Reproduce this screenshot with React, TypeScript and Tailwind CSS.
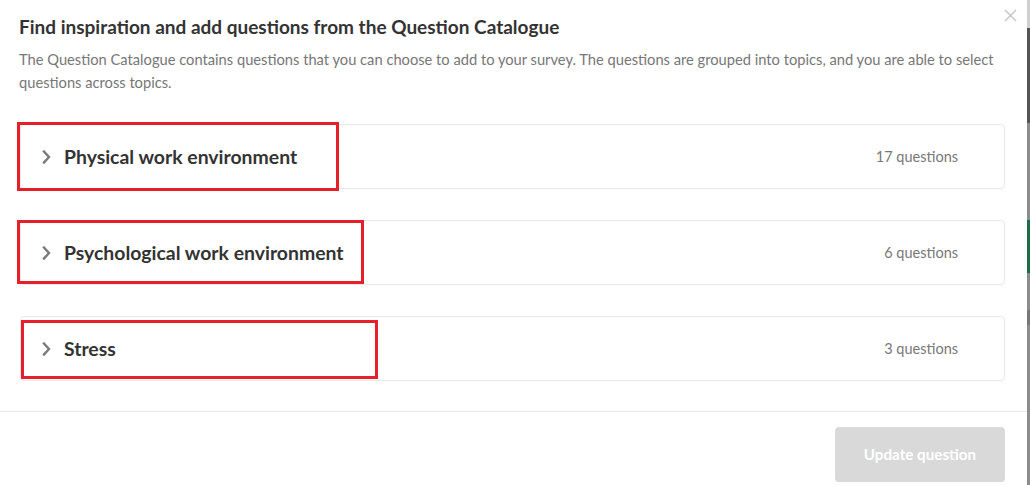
const topics = [
  { name: "Physical work environment", count: 17, mark: "left-[-3px] top-[-2px] h-[69px] w-[322px]" },
  { name: "Psychological work environment", count: 6, mark: "left-[-3px] top-[0px] h-[64px] w-[347px]" },
  { name: "Stress", count: 3, mark: "left-[1px] top-[4px] h-[59px] w-[357px]" },
];

function Chevron() {
  return (
    <svg width="9" height="14" viewBox="0 0 9 14" fill="none" className="shrink-0">
      <path d="M2 1.5 L7 7 L2 12.5" stroke="#7a7a7a" strokeWidth="2.4" strokeLinecap="square" />
    </svg>
  );
}

export default function App() {
  return (
    <div className="flex h-[485px] w-[1030px] overflow-hidden bg-white font-['Lato',sans-serif]">
      <div className="relative flex w-[1027px] shrink-0 flex-col rounded-tr-md bg-white">
        <button className="absolute right-[10px] top-[9px]" aria-label="Close">
          <svg width="13" height="13" viewBox="0 0 13 13">
            <path d="M1 1 L12 12 M12 1 L1 12" stroke="#c4c4c4" strokeWidth="1.4" />
          </svg>
        </button>

        <div className="px-[19px] pt-[15px]">
          <h2 className="text-[19px] font-bold leading-[24px] text-[#333]">
            Find inspiration and add questions from the Question Catalogue
          </h2>
          <p className="mt-[9px] pr-[10px] text-[14.7px] leading-[23px] text-[#777]">
            The Question Catalogue contains questions that you can choose to add to your survey. The questions are grouped into topics, and you are able to select questions across topics.
          </p>
        </div>

        <div className="mt-[30px] flex flex-col gap-[31px] pl-[20px] pr-[22px]">
          {topics.map((t) => (
            <div key={t.name} className="relative">
              <div className="flex h-[65px] items-center rounded border border-[#e8e8e8] pl-[21px] pr-[46px]">
                <Chevron />
                <span className="ml-[13px] text-[19.4px] font-bold text-[#333]">{t.name}</span>
                <span className="ml-auto text-[14.5px] text-[#777]">{t.count} questions</span>
              </div>
              <div className={`pointer-events-none absolute border-[3px] border-[#e5202a] ${t.mark}`} />
            </div>
          ))}
        </div>

        <div className="mt-[30px] border-t border-[#e8e8e8] pr-[22px] pt-[15px]">
          <div className="flex justify-end">
            <button className="h-[55px] w-[170px] rounded bg-[#d9d9d9] text-[15.2px] font-bold text-white">
              Update question
            </button>
          </div>
        </div>
      </div>

      <div className="flex w-[3px] flex-col">
        <div className="h-[28px] bg-[#d0d0d0]" />
        <div className="h-[95px] bg-[#555]" />
        <div className="h-[97px] bg-[#8c8c8c]" />
        <div className="h-[53px] bg-[#1e6b45]" />
        <div className="h-[37px] bg-[#8c8c8c]" />
        <div className="h-[15px] bg-[#777]" />
        <div className="flex-1 bg-[#8c8c8c]" />
      </div>
    </div>
  );
}
